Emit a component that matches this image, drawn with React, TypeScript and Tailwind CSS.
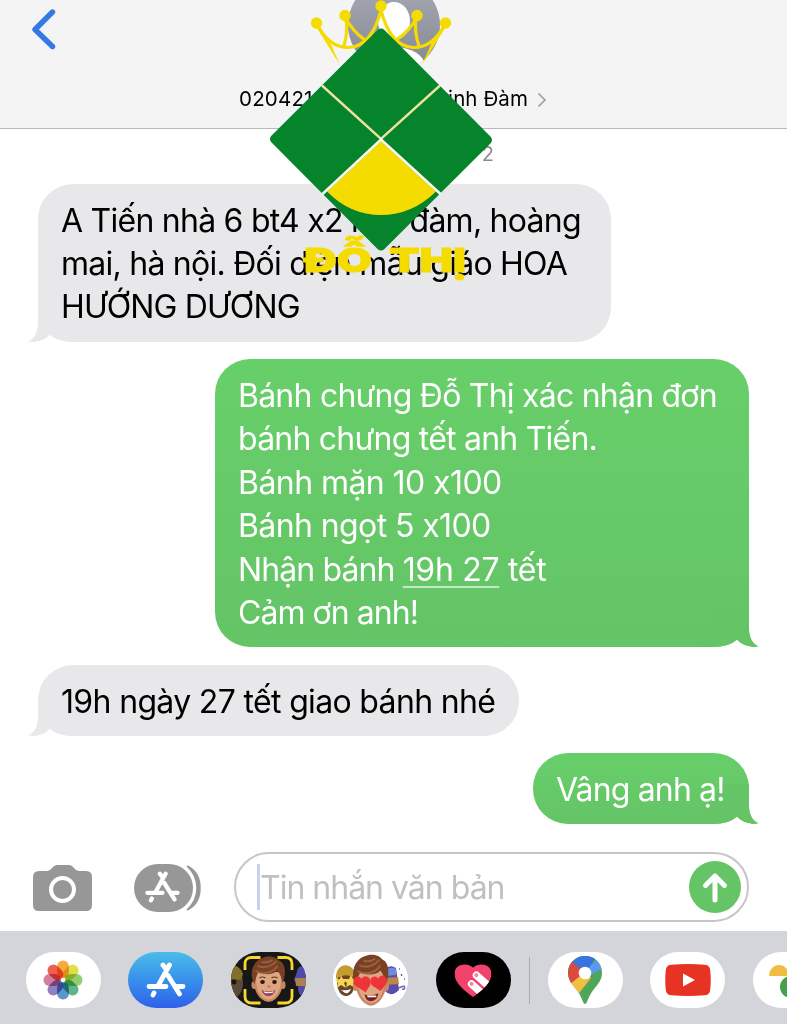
import type { ReactNode } from "react";

function Tail({ side }: { side: "left" | "right" }) {
  return (
    <svg
      viewBox="0 0 58 40"
      className={
        side === "right"
          ? "absolute -right-[10px] bottom-0 h-[40px] w-[58px]"
          : "absolute -left-[10px] bottom-0 h-[40px] w-[58px] -scale-x-100"
      }
    >
      <path d="M20 0H48V23Q49 36 58 39.500Q45 42 36 33Q28 40 14 40H0Z" fill={side === "right" ? "#64c466" : "#e8e8ea"} />
      <path d="M14 40.500Q28 40 36 33Q45 42 58 39.500V40.500Z" fill="#fff" />
    </svg>
  );
}

function Line({ children, track }: { children: ReactNode; track: string }) {
  return <div className={"h-[43.4px] whitespace-nowrap leading-[46px] " + track}>{children}</div>;
}

function Bubble({ side, size, children }: { side: "left" | "right"; size: string; children: ReactNode }) {
  const tone =
    side === "right"
      ? "ml-auto mr-[38px] bg-linear-to-b from-[#67cf69] to-[#64c466] text-white"
      : "ml-[38px] bg-[#e8e8ea] text-black";
  return (
    <div className={"relative shrink-0 rounded-[35px] px-[23px] pt-[14px] text-[32px] " + tone + " " + size}>
      <Tail side={side} />
      <div className="relative">{children}</div>
    </div>
  );
}

function StoreGlyph({ className }: { className: string }) {
  return (
    <svg viewBox="0 0 40 36" className={className} fill="none" stroke="#fff" strokeWidth="4.800" strokeLinecap="round">
      <path d="M17 3L20 7M23.500 3L12.500 23M22 13.500L33.500 32M3 24.500H20M30 24.500H37M8 31L7 33" />
    </svg>
  );
}

function Photos() {
  const petals = ["#f59a23", "#dfd82b", "#82c45a", "#44a878", "#3f83c4", "#806ab7", "#ca688e", "#ea4635"];
  return (
    <svg viewBox="-20 -20 40 40" className="size-[40px]">
      {petals.map((c, i) => (
        <rect key={c} x="-5.900" y="-19.500" width="11.800" height="17.500" rx="5.900" fill={c} opacity="0.86" transform={`rotate(${i * 45})`} className="mix-blend-multiply" />
      ))}
      <circle r="1.800" fill="#fff" />
    </svg>
  );
}

function Face({ hearts = false }: { hearts?: boolean }) {
  return (
    <g>
      <ellipse cx="-14.500" cy="5" rx="2.500" ry="4" fill="#c98661" />
      <ellipse cx="14.500" cy="5" rx="2.500" ry="4" fill="#c98661" />
      <path d="M-14-8C-16 5-13 14-7 19Q0 25 7 19C13 14 16 5 14-8Z" fill="#c88762" />
      <path d="M-12-8C-14 6-10 14-5 18Q0 21 5 18C10 14 14 6 12-8Z" fill="#dda580" />
      <path d="M-14 4C-20-6-16-19-6-22C0-25 8-23 11-19C17-17 18-6 14 3C13-2 12-6 9-9C1-4-6-6-10-8C-12-5-13 0-14 4Z" fill="#784126" />
      <path d="M-13-9C-5-5 4-7 9-14M-11-14C-4-11 4-14 8-19M-7-18C-3-17 1-18 4-20" fill="none" stroke="#9c613d" strokeWidth="1.800" />
      {hearts ? (
        <>
          <path d="M-5 10L-15 4C-20-2-12-7-9-2C-6-7 2-3-1 4Z" fill="#ee3438" />
          <path d="M9 9L1 4C-4-2 4-7 7-2C9-8 18-4 14 3Z" fill="#ee3438" />
          <path d="M-6 12Q1 14 7 11Q6 18 0 18Q-5 18-6 12Z" fill="#781d29" />
          <path d="M-4 13H5V14.500H-3Z" fill="#fff" />
        </>
      ) : (
        <>
          <path d="M-9-2Q-6-4-3-2M3-2Q6-4 9-2" fill="none" stroke="#643525" strokeWidth="1.200" />
          <ellipse cx="-6" cy="2" rx="2.300" ry="2" fill="#28150f" />
          <ellipse cx="6" cy="2" rx="2.300" ry="2" fill="#28150f" />
          <path d="M-1 6.500H2" stroke="#b87050" strokeWidth="1.300" />
          <path d="M-7 10Q0 13 7 10Q5 16 0 16Q-5 16-7 10Z" fill="#94405a" />
          <path d="M-5 11.300Q0 13 5 11.300V12.500Q0 14-4 12.800Z" fill="#fff" />
        </>
      )}
    </g>
  );
}

function MemojiFrame() {
  return (
    <svg viewBox="0 0 75 56" className="h-full w-full">
      <rect width="75" height="56" fill="#171717" />
      <ellipse cx="2" cy="31" rx="10" ry="15" fill="#5c4a36" />
      <path d="M-7 26C-6 10 8 10 12 22L10 28Z" fill="#83702a" />
      <circle cx="3" cy="30" r="2.500" fill="#201610" />
      <path d="M66 20Q66 13 75 14V48Q66 43 67 34L63 28Z" fill="#514ba8" />
      <path d="M64 26H75V34H65Z" fill="#ac814e" />
      <g transform="translate(37.500 28)"><Face /></g>
      <path d="M14 18V12Q14 5.500 20.500 5.500H29.500M46.500 5.500H54.500Q61 5.500 61 12V18M14 37V44.500Q14 51 20.500 51H29.500M46.500 51H54.500Q61 51 61 44.500V37" fill="none" stroke="#f9d62e" strokeWidth="2.800" />
    </svg>
  );
}

function MemojiStickers() {
  return (
    <svg viewBox="0 0 75 56" className="h-full w-full">
      <rect width="75" height="56" fill="#fff" />
      <ellipse cx="13" cy="31" rx="9" ry="13" fill="#6b452d" />
      <path d="M3 27C2 9 22 9 23 26Q12 20 3 27Z" fill="#c39c2d" />
      <path d="M8 23L10 27L15 27L11 31L13 36L8 33L4 36L5 31L2 28L7 27ZM18 23L20 27L24 28L20 31L21 35L17 33L13 35L14 31L11 28L16 27Z" fill="#f7d651" />
      <path d="M8 38Q13 39 18 37Q16 42 12 41Z" fill="#fff" />
      <path d="M52 17Q57 12 63 16L66 38Q58 46 52 39Z" fill="#594dac" />
      <path d="M53 18Q58 14 63 17V23L53 24Z" fill="#6e8cd7" />
      <path d="M51 26L65 25L66 32L51 33Z" fill="#bc8846" />
      <path d="M65 36L71 34Q73 38 69 37M68 22L69 24M66 17H67M71 27H72" fill="none" stroke="#7559c3" strokeWidth="1.400" />
      <g transform="translate(38 29) scale(1.060 1.120)"><Face hearts /></g>
    </svg>
  );
}

function HeartTouch() {
  return (
    <svg viewBox="0 0 40 36" className="h-[35px] w-[40px]">
      <defs>
        <clipPath id="heart">
          <path d="M20 35C12 29 1 21 1 11C1 1 14-1 20 5C26-1 39 1 39 11C39 21 28 29 20 35Z" />
        </clipPath>
      </defs>
      <g clipPath="url(#heart)">
        <rect width="40" height="36" fill="#f3436c" />
        <g transform="translate(18.500 21.500) rotate(-48)">
          <path d="M-3.800 0A3.800 3.800 0 0 1 3.800 0V15H-3.800Z" fill="#fff" />
          <circle r="2" fill="#f3839c" />
        </g>
        <g transform="translate(23.500 12.500) rotate(-48)">
          <path d="M-3.800 0A3.800 3.800 0 0 1 3.800 0V18H-3.800Z" fill="#fff" />
          <circle r="2" fill="#f3839c" />
        </g>
      </g>
    </svg>
  );
}

function MapPin() {
  return (
    <svg viewBox="0 0 36 48" className="h-[48px] w-[36px]">
      <defs>
        <clipPath id="pin">
          <path d="M18 0C8 0 1 7.500 1 17C1 24 5 28 9 33C13 38 15 43 16 46Q18 50 20 46C21 43 23 38 27 33C31 28 35 24 35 17C35 7.500 28 0 18 0Z" />
        </clipPath>
      </defs>
      <g clipPath="url(#pin)">
        <path d="M0 0H36V48H0Z" fill="#4fa65b" />
        <path d="M-2 33L18 10L24 22L9 41Z" fill="#f3bf42" />
        <path d="M0 5L6 5L18 16L2 29Z" fill="#d94b3d" />
        <path d="M5 6L15-2H31L19 17Z" fill="#3973de" />
        <path d="M30 3L36 12L22 20L17 17Z" fill="#5b98f2" />
      </g>
      <circle cx="18" cy="17" r="6.300" fill="#fff" />
    </svg>
  );
}

function Pill({ tone = "bg-white", children }: { tone?: string; children: ReactNode }) {
  return (
    <div className={"flex h-[56px] w-[75px] shrink-0 items-center justify-center overflow-hidden rounded-[28px] " + tone}>
      {children}
    </div>
  );
}

function BrandMark() {
  return (
    <svg viewBox="260 0 240 290" className="pointer-events-none absolute left-[260px] top-0 z-10 h-[290px] w-[240px]">
      <g fill="none" stroke="#f5dc00" strokeWidth="3.200">
        <path d="M317 24Q329 48 349 47.500Q372 46 381 10" />
        <path d="M346 18Q348 32 344 46M345 17Q353 32 365 40" />
        <path d="M445 24Q433 48 413 47.500Q390 46 381 10" />
        <path d="M416 18Q414 32 419 46M417 17Q409 32 396 40" />
      </g>
      <path d="M315 25L340 65L330 42ZM447 25L422 65L432 42Z" fill="#f5dc00" />
      <g fill="#f5dc00">
        <circle cx="316.500" cy="23" r="5.700" />
        <circle cx="345" cy="15.500" r="5.700" />
        <circle cx="381" cy="6" r="5.700" />
        <circle cx="417" cy="15.500" r="5.700" />
        <circle cx="445.500" cy="23" r="5.700" />
      </g>
      <path d="M381 33L487.500 140L381 246L274.500 139Z" fill="#05842c" stroke="#05842c" strokeWidth="9" strokeLinejoin="round" />
      <path d="M381 141L327 191.500Q350 215 381 215Q412 215 436 191.500Z" fill="#f5dc00" />
      <path d="M322 85.500L381 139L440 85.500" fill="none" stroke="#eee2a0" strokeWidth="2.400" />
      <path d="M322.500 194L381 139.500L440.500 194" fill="none" stroke="#fbfbf3" strokeWidth="2.600" />
      <g fill="#f5dc00" stroke="#f5dc00" strokeWidth="0.800" fontFamily="Inter, sans-serif" fontWeight="900" fontSize="33">
        <text x="304" y="272" textLength="68" lengthAdjust="spacingAndGlyphs">ĐỖ</text>
        <text x="389" y="272" textLength="77" lengthAdjust="spacingAndGlyphs">THỊ</text>
      </g>
    </svg>
  );
}

export default function App() {
  return (
    <div className="relative flex h-[1024px] w-[787px] flex-col overflow-hidden bg-white font-['Inter','Noto_Sans',sans-serif]">
      <header className="relative flex h-[129px] shrink-0 flex-col items-center border-b border-[#b8b8ba] bg-[#f4f4f5]">
        <svg viewBox="0 0 26 42" className="absolute left-[31px] top-[8px] h-[42px] w-[26px]">
          <path d="M21.500 4L4 21.500L21.500 38.500" fill="none" stroke="#3478e5" strokeWidth="5.400" strokeLinecap="round" strokeLinejoin="round" />
        </svg>
        <svg viewBox="0 0 92 72" className="h-[72px] w-[92px]">
          <defs>
            <linearGradient id="avatar" x1="0" y1="0" x2="0" y2="1">
              <stop stopColor="#a7abb7" />
              <stop offset="1" stopColor="#858790" />
            </linearGradient>
            <clipPath id="round"><circle cx="46" cy="25" r="46" /></clipPath>
          </defs>
          <circle cx="46" cy="25" r="46" fill="url(#avatar)" />
          <ellipse cx="46" cy="21" rx="16" ry="19" fill="#fff" />
          <ellipse cx="46" cy="66" rx="31" ry="19" fill="#fff" clipPath="url(#round)" />
        </svg>
        <div className="mt-[13px] flex w-[309px] items-center">
          <div className="flex w-[289px] justify-between text-[20.500px] leading-[28px] text-black">
            <span className="tracking-[0.200px]">020421</span>
            <span className="tracking-[0.100px]">Linh Đàm</span>
          </div>
          <svg viewBox="0 0 10 16" className="ml-[9px] mt-[2px] h-[16px] w-[10px] shrink-0">
            <path d="M1.500 1.500L8 8L1.500 14.500" fill="none" stroke="#a0a0a4" strokeWidth="1.700" />
          </svg>
        </div>
      </header>

      <main className="flex h-[695px] shrink-0 flex-col gap-[17.500px]">
        <div className="-mb-[17.500px] flex h-[55px] justify-end pr-[293px] pt-[11px] text-[20px] leading-[28px] text-[#8c8c90]">
          Th 4, 10 thg&nbsp; 2
        </div>
        <Bubble side="left" size="h-[158px] w-[573px]">
          <Line track="tracking-[-0.750px]">A Tiến nhà 6 bt4 x2 linh đàm, hoàng</Line>
          <Line track="tracking-[-0.750px]">mai, hà nội. Đối diện mẫu giáo HOA</Line>
          <Line track="tracking-[-0.850px]">HƯỚNG DƯƠNG</Line>
        </Bubble>
        <Bubble side="right" size="h-[288px] w-[534px]">
          <Line track="tracking-[-0.770px]">Bánh chưng Đỗ Thị xác nhận đơn</Line>
          <Line track="tracking-[-0.770px]">bánh chưng tết anh Tiến.</Line>
          <Line track="tracking-[-0.560px]">Bánh mặn 10 x100</Line>
          <Line track="tracking-[-0.600px]">Bánh ngọt 5 x100</Line>
          <Line track="tracking-[-0.300px]">
            <span className="tracking-[-0.900px]">Nhận bánh </span>
            <span className="underline decoration-white/60 decoration-2 underline-offset-[5px]">19h 27</span> tết
          </Line>
          <Line track="tracking-[-0.950px]">Cảm ơn anh!</Line>
        </Bubble>
        <Bubble side="left" size="h-[71px] w-[481px]">
          <Line track="tracking-[-0.660px]">19h ngày 27 tết giao bánh nhé</Line>
        </Bubble>
        <Bubble side="right" size="h-[71px] w-[216px]">
          <Line track="tracking-[-0.850px]">Vâng anh ạ!</Line>
        </Bubble>
      </main>

      <section className="flex h-[107px] shrink-0 items-start pl-[33px] pt-[28px]">
        <svg viewBox="0 0 60 46" className="mt-[13px] h-[46px] w-[60px]">
          <path d="M6 6H14Q17 6 19 3Q21 0 24 0H36Q39 0 41 3Q43 6 46 6H53Q59 6 59 12V40Q59 46 53 46H6Q0 46 0 40V12Q0 6 6 6Z" fill="#979797" />
          <circle cx="29.500" cy="24.500" r="11.500" fill="none" stroke="#fff" strokeWidth="4" />
        </svg>
        <div className="relative ml-[41px] mt-[12px] h-[48px] w-[67px]">
          <svg viewBox="0 0 67 48" className="h-full w-full">
            <path d="M53 2Q66 8 66 24Q66 40 53 46Q63 37 63 24Q63 11 53 2Z" fill="#979797" stroke="#979797" strokeWidth="1.500" />
            <rect width="59" height="48" rx="24" fill="#979797" />
          </svg>
          <StoreGlyph className="absolute left-[10px] top-[7px] h-[32px] w-[37px]" />
        </div>
        <div className="ml-[33px] flex h-[70px] w-[515px] items-center justify-between rounded-[35px] border-2 border-[#c8c5c9] pl-[21px] pr-[6px]">
          <div className="flex items-center">
            <div className="h-[46px] w-[3px] bg-[#c9d0f0]" />
            <span className="mt-[2px] whitespace-nowrap text-[32px] tracking-[-1px] text-[#c0c0c3]">Tin nhắn văn bản</span>
          </div>
          <svg viewBox="0 0 52 52" className="size-[52px]">
            <circle cx="26" cy="26" r="26" fill="#64c466" />
            <path d="M26 39V15M16.500 24.500L26 15L35.500 24.500" fill="none" stroke="#fff" strokeWidth="5" strokeLinecap="round" strokeLinejoin="round" />
          </svg>
        </div>
      </section>

      <nav className="flex h-[93px] shrink-0 items-start gap-[27.500px] overflow-hidden bg-[#d4d5db] pl-[25.500px] pt-[21px]">
        <Pill><Photos /></Pill>
        <Pill tone="bg-linear-to-b from-[#4bbce9] to-[#315fe9]"><StoreGlyph className="h-[36px] w-[40px]" /></Pill>
        <Pill><MemojiFrame /></Pill>
        <Pill><MemojiStickers /></Pill>
        <Pill tone="bg-black"><HeartTouch /></Pill>
        <div className="-mx-[9.500px] mt-[5px] h-[47px] w-px shrink-0 bg-[#adaeb3]" />
        <Pill><MapPin /></Pill>
        <Pill>
          <svg viewBox="0 0 46 32" className="h-[32px] w-[46px]">
            <path d="M6 .8Q23-.8 40 .8Q45 1 45.300 7Q46.200 16 45.300 25Q45 31 40 31.200Q23 32.800 6 31.200Q1 31 .7 25Q-.2 16 .7 7Q1 1 6 .8Z" fill="#e63323" />
            <path d="M18 9.500L30 16L18 22.500Z" fill="#fff" />
          </svg>
        </Pill>
        <Pill>
          <svg viewBox="0 0 43 42" className="h-[42px] w-[43px]">
            <path d="M0 17A10 11 0 0 1 20 17Z" fill="#f2bb42" />
            <path d="M22 17A11 11 0 0 0 22 39Z" fill="#469f4b" />
            <path d="M22 1A11 11 0 0 1 22 20Z" fill="#e14e40" />
            <path d="M22 20H42A10 11 0 0 1 22 20Z" fill="#4881e8" />
          </svg>
        </Pill>
      </nav>

      <BrandMark />
    </div>
  );
}
